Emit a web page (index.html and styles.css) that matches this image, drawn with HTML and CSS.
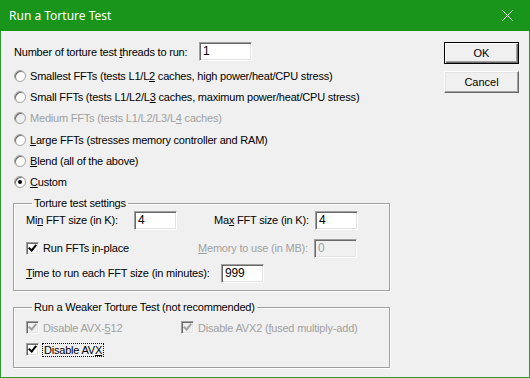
FILE: index.html
```html
<!DOCTYPE html>
<html lang="en">
<head>
    <meta charset="UTF-8">
    <title>Run a Torture Test</title>
    <link rel="stylesheet" href="styles.css">
</head>
<body>
    <div class="window">
        <div class="titlebar">
            <span class="title">Run a Torture Test</span>
            <svg class="close" width="11" height="11" viewBox="0 0 11 11">
                <path d="M0.5 0.5L10.5 10.5M10.5 0.5L0.5 10.5" stroke="#fff" stroke-width="1" fill="none"/>
            </svg>
        </div>

        <div class="content">
            <div class="form">
                <div class="threads">
                    <span class="threads-label">Number of torture test <u>t</u>hreads to run:</span>
                    <span class="edit">1</span>
                </div>

                <div class="radios">
                    <div class="radio-row"><span class="radio"></span><span>Smallest FFTs (tests L1/L<u>2</u> caches, high power/heat/CPU stress)</span></div>
                    <div class="radio-row"><span class="radio"></span><span>Small FFTs (tests L1/L2/L<u>3</u> caches, maximum power/heat/CPU stress)</span></div>
                    <div class="radio-row disabled"><span class="radio"></span><span>Medium FFTs (tests L1/L2/L3/L<u>4</u> caches)</span></div>
                    <div class="radio-row"><span class="radio"></span><span><u>L</u>arge FFTs (stresses memory controller and RAM)</span></div>
                    <div class="radio-row"><span class="radio"></span><span><u>B</u>lend (all of the above)</span></div>
                    <div class="radio-row"><span class="radio checked"></span><span><u>C</u>ustom</span></div>
                </div>

                <fieldset class="group settings">
                    <legend>Torture test settings</legend>
                    <div class="row row-size">
                        <span class="lbl lbl-min">Mi<u>n</u> FFT size (in K):</span>
                        <span class="edit small">4</span>
                        <span class="lbl lbl-max">Ma<u>x</u> FFT size (in K):</span>
                        <span class="edit small">4</span>
                    </div>
                    <div class="row row-mem">
                        <span class="check-wrap cw-inplace"><span class="check on"></span><span>Run FFTs <u>i</u>n-place</span></span>
                        <span class="lbl lbl-mem disabled"><u>M</u>emory to use (in MB):</span>
                        <span class="edit small off">0</span>
                    </div>
                    <div class="row row-time">
                        <span class="lbl lbl-time"><u>T</u>ime to run each FFT size (in minutes):</span>
                        <span class="edit small">999</span>
                    </div>
                </fieldset>

                <fieldset class="group weaker">
                    <legend>Run a Weaker Torture Test (not recommended)</legend>
                    <div class="row row-avx first">
                        <span class="check-wrap cw-512 disabled"><span class="check on off"></span><span>Disable AVX-<u>5</u>12</span></span>
                        <span class="check-wrap disabled"><span class="check on off"></span><span>Disable AVX2 (<u>f</u>used multiply-add)</span></span>
                    </div>
                    <div class="row row-avx">
                        <span class="check-wrap"><span class="check on"></span><span class="focus">Disable AV<u>X</u></span></span>
                    </div>
                </fieldset>
            </div>

            <div class="buttons">
                <button class="btn default">OK</button>
                <button class="btn">Cancel</button>
            </div>
        </div>
    </div>
</body>
</html>
```

FILE: styles.css
```css
body {
    margin: 0;
    background: #f0f0f0;
    font-family: "Liberation Sans", Arial, sans-serif;
    font-size: 11px;
    letter-spacing: -0.2px;
    color: #000;
}
u {
    text-decoration-thickness: 1px;
    text-underline-offset: 1px;
}
.window {
    width: 530px;
    height: 378px;
    box-sizing: border-box;
    border: 1px solid #2b9b2d;
    border-top: none;
    background: #f0f0f0;
}
.titlebar {
    height: 31px;
    margin: 0 -1px;
    background: #18951a;
    display: flex;
    align-items: center;
    justify-content: space-between;
    padding: 0 17px 0 9px;
    color: #fff;
}
.title {
    font-family: "Noto Sans", "Open Sans", sans-serif;
    font-size: 12px;
    letter-spacing: 0;
    margin-top: -1px;
}
.content {
    display: flex;
    justify-content: space-between;
    padding: 11px 10px 0 13px;
}
.form {
    width: 376px;
}
.threads {
    display: flex;
    align-items: center;
    height: 19px;
}
.threads-label {
    width: 185px;
}
.edit {
    box-sizing: border-box;
    display: inline-block;
    width: 53px;
    height: 19px;
    padding: 1px 3px;
    line-height: 14px;
    font-size: 12px;
    background: #fff;
    border: 1px solid;
    border-color: #a0a0a0 #fff #fff #a0a0a0;
    box-shadow: inset 1px 1px 0 #696969, inset -1px -1px 0 #e3e3e3;
}
.edit.small {
    width: 43px;
}
.edit.off {
    background: #f0f0f0;
    color: #a0a0a0;
}
.radios {
    margin-top: 4px;
}
.radio-row {
    display: flex;
    align-items: center;
    height: 21.3px;
}
.radio {
    box-sizing: border-box;
    width: 12px;
    height: 12px;
    border-radius: 50%;
    margin-right: 4px;
    background: #fff;
    border: 1px solid #a0a0a0;
    box-shadow: inset 1px 1px 0 #696969;
    position: relative;
    flex: none;
}
.radio.checked::after {
    content: "";
    position: absolute;
    left: 3px;
    top: 3px;
    width: 4px;
    height: 4px;
    border-radius: 50%;
    background: #000;
}
.disabled {
    color: #a0a0a0;
}
.disabled .radio {
    background: #f0f0f0;
}
.group {
    box-sizing: border-box;
    margin: 4px 0 0 -1px;
    padding: 0 0 0 12px;
    border: 1px solid #a0a0a0;
    box-shadow: 1px 1px 0 #fff, inset 1px 1px 0 #fff;
}
.group legend {
    padding: 0 2px;
    margin-left: 6px;
    line-height: 13px;
}
.settings {
    height: 94px;
}
.row {
    display: flex;
    align-items: center;
}
.row-size {
    height: 19px;
    margin-top: 1px;
}
.row-mem {
    height: 19px;
    margin-top: 9px;
}
.row-time {
    height: 19px;
    margin-top: 6px;
}
.lbl-min {
    width: 108px;
}
.lbl-max {
    width: 101px;
    margin-left: 37px;
}
.lbl-mem {
    width: 116px;
}
.lbl-time {
    width: 195px;
}
.check-wrap {
    display: flex;
    align-items: center;
}
.cw-inplace {
    width: 172px;
}
.cw-512 {
    width: 155px;
}
.check {
    box-sizing: border-box;
    width: 13px;
    height: 13px;
    margin-right: 4px;
    background: #fff;
    border: 1px solid;
    border-color: #a0a0a0 #fff #fff #a0a0a0;
    box-shadow: inset 1px 1px 0 #696969, inset -1px -1px 0 #e3e3e3;
    position: relative;
    flex: none;
}
.check.on::after {
    content: "";
    position: absolute;
    left: 2px;
    top: 1px;
    border: solid #000;
    border-width: 0 2px 2px 0;
    width: 3px;
    height: 6px;
    transform: translate(1px, -1px) rotate(40deg);
}
.check.off {
    background: #f0f0f0;
}
.check.off::after {
    border-color: #a0a0a0;
}
.weaker {
    margin-top: 10px;
    height: 67px;
}
.row-avx {
    height: 22px;
}
.row-avx.first {
    margin-top: 3px;
}
.focus {
    outline: 1px dotted #000;
    padding: 0 1px;
}
.buttons {
    display: flex;
    flex-direction: column;
    gap: 7px;
}
.btn {
    box-sizing: border-box;
    width: 75px;
    height: 22px;
    padding: 0;
    font-family: "Liberation Sans", Arial, sans-serif;
    font-size: 11px;
    background: #f0f0f0;
    border: 1px solid;
    border-color: #fff #696969 #696969 #fff;
    box-shadow: inset -1px -1px 0 #a0a0a0, inset 1px 1px 0 #e3e3e3;
}
.btn.default {
    border: 1px solid #000;
    box-shadow: inset 1px 1px 0 #fff, inset -1px -1px 0 #696969, inset -2px -2px 0 #a0a0a0;
}
```
